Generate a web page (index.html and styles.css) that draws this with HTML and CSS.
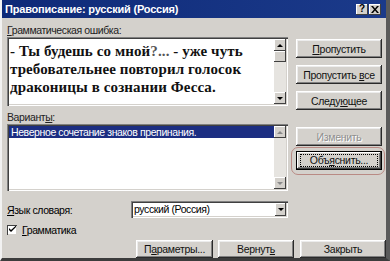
FILE: index.html
```html
<!DOCTYPE html>
<html lang="ru">
<head>
    <meta charset="UTF-8">
    <title>Правописание: русский (Россия)</title>
    <link rel="stylesheet" href="styles.css">
</head>
<body>
    <div class="dialog">
        <div class="titlebar">
            <span class="title">Правописание: русский (Россия)</span>
            <div class="title-buttons">
                <span class="tbtn">?</span>
                <span class="tbtn">
                    <svg width="8" height="7" viewBox="0 0 8 7"><path d="M0 0h2l2 2.5 2-2.5h2l-3 3.5 3 3.5h-2l-2-2.5-2 2.5h-2l3-3.5z" fill="#000"/></svg>
                </span>
            </div>
        </div>

        <div class="content">
            <div class="main">
                <div class="left">
                    <div class="label"><u>Г</u>рамматическая ошибка:</div>
                    <div class="field textbox">
                        <div class="text">
                            - Ты будешь со мной<span class="err">?...</span> - уже чуть<br>
                            требовательнее повторил голосок<br>
                            драконицы в сознании Фесса.
                        </div>
                        <div class="scrollbar">
                            <span class="sb-btn"><i class="arrow up"></i></span>
                            <span class="sb-thumb"></span>
                            <span class="sb-track"></span>
                            <span class="sb-btn"><i class="arrow down"></i></span>
                        </div>
                    </div>

                    <div class="label label-gap">Вариант<u>ы</u>:</div>
                    <div class="field listbox">
                        <div class="list">
                            <div class="item selected">Неверное сочетание знаков препинания.</div>
                        </div>
                        <div class="scrollbar disabled">
                            <span class="sb-btn"><i class="arrow up"></i></span>
                            <span class="sb-track"></span>
                            <span class="sb-btn"><i class="arrow down"></i></span>
                        </div>
                    </div>
                </div>

                <div class="right">
                    <button class="btn b-skip"><span><u>П</u>ропустить</span></button>
                    <button class="btn b-skipall"><span>Пропустить <u>в</u>се</span></button>
                    <button class="btn b-next"><span>Следу<u>ю</u>щее</span></button>
                    <button class="btn b-change" disabled><span>Изменить</span></button>
                    <div class="mark">
                        <button class="btn focused"><span class="focus-rect">Объ<u>я</u>снить...</span></button>
                    </div>
                </div>
            </div>

            <div class="lang-row">
                <span class="lang-label"><u>Я</u>зык словаря:</span>
                <div class="field combo">
                    <span class="combo-value">русский (Россия)</span>
                    <span class="sb-btn combo-btn"><i class="arrow down"></i></span>
                </div>
            </div>

            <label class="check-row">
                <span class="checkbox">
                    <svg width="7" height="7" viewBox="0 0 7 7"><path d="M0 2v2l2 2 5-5v-1.5l-5 4.5z" fill="#000"/></svg>
                </span>
                <span><u>Г</u>рамматика</span>
            </label>

            <div class="bottom-row">
                <button class="btn b-params"><span>П<u>а</u>раметры...</span></button>
                <button class="btn b-undo"><span>Вернут<u>ь</u></span></button>
                <button class="btn b-close"><span>Закрыть</span></button>
            </div>
        </div>
    </div>
</body>
</html>
```

FILE: styles.css
```css
* {
    margin: 0;
    padding: 0;
    box-sizing: border-box;
}

body {
    width: 390px;
    height: 261px;
    overflow: hidden;
    background: #d4d1cc;
    font-family: 'Liberation Sans', Arial, sans-serif;
    font-size: 10.5px;
    letter-spacing: -0.4px;
    color: #000;
}

u {
    text-decoration: underline;
    text-underline-offset: 1px;
}

.dialog {
    width: 390px;
    height: 261px;
    background: #d4d1cc;
    border-left: 2px solid #f2f2f2;
    border-right: 4px solid #5a5a5a;
    border-bottom: 3px solid #3c3c3c;
    display: flex;
    flex-direction: column;
}

/* заголовок окна */
.titlebar {
    height: 18px;
    flex: none;
    background: linear-gradient(90deg, #0e2a78 0%, #1b3a8a 100%);
    display: flex;
    align-items: center;
    justify-content: space-between;
    padding: 0 5px 0 3px;
}

.title {
    color: #fff;
    font-weight: bold;
    font-size: 11px;
    letter-spacing: -0.2px;
}

.title-buttons {
    display: flex;
    gap: 1px;
}

.tbtn {
    width: 12px;
    height: 11px;
    background: #d4d1cc;
    box-shadow: inset -1px -1px #404040, inset 1px 1px #fff;
    display: flex;
    align-items: center;
    justify-content: center;
    font-weight: bold;
    font-size: 10px;
    letter-spacing: 0;
    line-height: 1;
}

.content {
    padding: 6px 0 0 5px;
}

.main {
    display: flex;
    gap: 8px;
}

.left {
    width: 281px;
}

.label {
    height: 13px;
    line-height: 13px;
    color: #222;
}

.label-gap {
    margin-top: 5px;
}

/* утопленные поля */
.field {
    background: #fff;
    box-shadow: inset 1px 1px #808080, inset 2px 2px #404040, inset -1px -1px #fff, inset -2px -2px #d4d1cc;
    padding: 2px;
    display: flex;
}

.textbox {
    height: 69px;
}

.text {
    flex: 1;
    padding: 3px 0 0 1px;
    font-family: 'Liberation Serif', 'Times New Roman', serif;
    font-weight: bold;
    font-size: 15px;
    letter-spacing: 0.1px;
    line-height: 18px;
    color: #111;
    white-space: nowrap;
}

.err {
    color: #555;
}

.scrollbar {
    width: 12px;
    display: flex;
    flex-direction: column;
    background: #e6e4e0;
}

.sb-btn {
    height: 12px;
    flex: none;
    background: #d4d1cc;
    box-shadow: inset -1px -1px #404040, inset 1px 1px #fff;
    display: flex;
    align-items: center;
    justify-content: center;
}

.sb-thumb {
    height: 11px;
    flex: none;
    background: #d4d1cc;
    box-shadow: inset -1px -1px #404040, inset 1px 1px #fff;
}

.sb-track {
    flex: 1;
}

.arrow {
    width: 0;
    height: 0;
    border-left: 3px solid transparent;
    border-right: 3px solid transparent;
}

.arrow.up {
    border-bottom: 3px solid #000;
}

.arrow.down {
    border-top: 3px solid #000;
}

.scrollbar.disabled .arrow.up {
    border-bottom-color: #8a8a8a;
}

.scrollbar.disabled .arrow.down {
    border-top-color: #8a8a8a;
}

.listbox {
    height: 67px;
}

.list {
    flex: 1;
}

.item {
    height: 12px;
    line-height: 12px;
    padding-left: 2px;
    white-space: nowrap;
}

.item.selected {
    background: #1c2e82;
    color: #fff;
}

/* кнопки справа */
.right {
    width: 86px;
    display: flex;
    flex-direction: column;
}

.btn {
    font-family: inherit;
    font-size: 10.5px;
    letter-spacing: -0.3px;
    color: #111;
    background: #d4d1cc;
    border: none;
    height: 19px;
    width: 100%;
    box-shadow: inset -1px -1px #2a2a2a, inset 1px 1px #fff, inset -2px -2px #808080, inset 2px 2px #ececec;
    display: flex;
    align-items: center;
    justify-content: center;
    white-space: nowrap;
}

.b-skip {
    margin-top: 15px;
}

.b-skipall,
.b-next {
    margin-top: 7px;
}

.b-change {
    margin-top: 17px;
    color: #8f8f8f;
    text-shadow: 1px 1px #fff;
}

.mark {
    margin: 1px -3px 0 -5px;
    padding: 3px 2px 4px 4px;
    border: 1px solid #b98a84;
    border-radius: 7px;
}

.btn.focused {
    box-shadow: inset 0 0 0 1px #000, inset -2px -2px #404040, inset 2px 2px #fff, inset -3px -3px #808080;
}

.focus-rect {
    width: 100%;
    margin: 0 4px;
    height: 13px;
    line-height: 11px;
    border: 1px dotted #000;
    text-align: center;
}

/* нижняя часть */
.lang-row {
    display: flex;
    align-items: center;
    margin-top: 10px;
}

.lang-label {
    width: 124px;
}

.combo {
    width: 157px;
    height: 17px;
    align-items: center;
}

.combo-value {
    flex: 1;
    padding-left: 1px;
    line-height: 13px;
}

.combo-btn {
    width: 11px;
    height: 13px;
}

.check-row {
    display: flex;
    align-items: center;
    gap: 5px;
    margin-top: 5px;
    height: 13px;
}

.checkbox {
    width: 10px;
    height: 10px;
    background: #fff;
    box-shadow: inset 1px 1px #404040, inset -1px -1px #d4d1cc;
    display: flex;
    align-items: center;
    justify-content: center;
}

.bottom-row {
    display: flex;
    justify-content: flex-end;
    gap: 5px;
    margin-top: 4px;
}

.bottom-row .btn {
    height: 18px;
}

.bottom-row .b-params {
    width: 77px;
}

.bottom-row .b-undo {
    width: 76px;
}

.bottom-row .b-close {
    width: 86px;
    margin-left: 1px;
}
```
